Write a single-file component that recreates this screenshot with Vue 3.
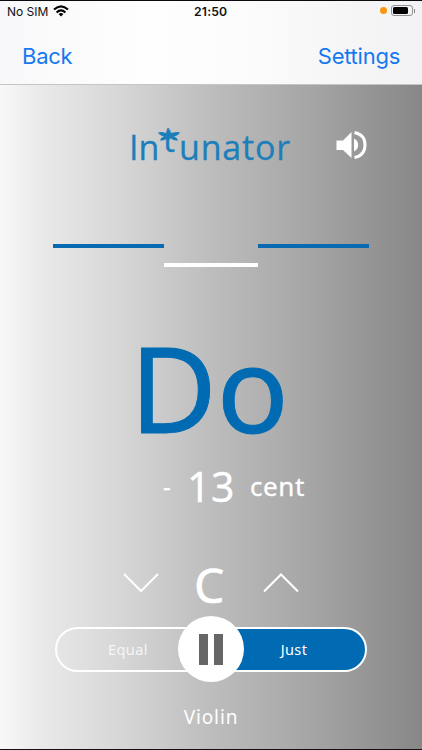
<script setup>
const meter = ['flat', 'center', 'sharp']
</script>

<template>
  <main class="phone">
    <header class="header">
      <div class="status">
        <span class="carrier">No SIM</span>
        <svg class="wifi" viewBox="0 0 16 12" width="16" height="12">
          <g fill="none" stroke="#000" stroke-width="2.1">
            <path d="M1 4.6Q8 -1.9 15 4.6" />
            <path d="M3.6 7.5Q8 3.4 12.4 7.5" />
          </g>
          <path d="M8 11.5L5.6 9Q8 7 10.4 9Z" />
        </svg>
        <span class="time">21:50</span>
        <i class="dot"></i>
        <span class="battery"><i></i></span>
        <i class="cap"></i>
      </div>
      <nav class="nav"><a class="back">Back</a><a class="settings">Settings</a></nav>
    </header>

    <section class="body">
      <div class="brand">
        <h1 class="logo"><span class="in">In</span><span class="tee">t<svg class="leaves" viewBox="0 0 24 14" width="24" height="14">
          <g fill="#1c7fbb">
            <path d="M10.600 0.300h3v9h-3z" />
            <path d="M12 6.500C8.500 1.800 5 1.200 0.800 2.500C3.500 6.200 8 7.700 12 6.500Z" />
            <path d="M12 6.500C15.500 1.800 19.500 1.200 23.200 2.500C20.500 6.200 16 7.700 12 6.500Z" />
            <path d="M12 5.200C7.500 5.700 4 7.200 3 10.400C7.500 10.800 10.500 9.200 12 5.200Z" />
            <path d="M12 5.200C16.500 5.700 20 7.200 21 10.400C16.500 10.800 13.500 9.200 12 5.200Z" />
          </g>
        </svg></span><span class="rest">unator</span></h1>
        <svg class="speaker" viewBox="0 0 32 30" width="32" height="30" fill="#fff">
          <path d="M0.500 10.500H7L15.500 2V28L7 20H0.500Z" />
          <path d="M18 8.500Q22.200 10.600 22.200 15Q22.200 19.400 18 21.500Z" />
          <path d="M18.500 2.500C26 4 29 9 29 15S26 26 18.500 27.500" fill="none" stroke="#fff" stroke-width="3" />
        </svg>
      </div>

      <div class="meter"><i v-for="m in meter" :key="m" :class="m"></i></div>
      <div class="note">Do</div>
      <div class="cents"><span class="sign">-</span><span class="num">13</span><span class="unit">cent</span></div>

      <div class="picker">
        <svg viewBox="0 0 36 20" width="36" height="20"><path d="M1 1L18 18L35 1" /></svg>
        <span class="key">C</span>
        <svg viewBox="0 0 36 20" width="36" height="20"><path d="M1 18.500L18 1.500L35 18.500" /></svg>
      </div>

      <div class="toggle">
        <button class="pill equal">Equal</button>
        <button class="pause"><i></i><i></i></button>
        <button class="pill just">Just</button>
      </div>
      <div class="instrument">Violin</div>
    </section>
  </main>
</template>

<style>
body { margin: 0; }
</style>

<style scoped>
* { box-sizing: border-box; }
.phone { width: 422px; height: 750px; overflow: hidden; display: flex; flex-direction: column; border-top: 1px solid #0d0a0d; border-bottom: 1px solid #111; font-family: "Noto Sans", sans-serif; }
.header { height: 84px; flex: none; background: linear-gradient(90deg, #f8f8fa, #fefefe 35%, #fcfcfc 55%, #f2f2f4); border-bottom: 1px solid #c4c6c6; font-family: Inter, sans-serif; }
.status { display: flex; align-items: center; height: 20px; padding-left: 7px; color: #111; }
.carrier { width: 46px; font-size: 12px; letter-spacing: 0; white-space: nowrap; }
.wifi { flex: none; }
.time { width: 42px; margin-left: 125px; font-size: 12.200px; font-weight: 600; letter-spacing: 0.200px; white-space: nowrap; }
.dot { width: 7px; height: 7px; margin-left: 144px; margin-top: -1px; border-radius: 50%; background: #f9960f; }
.battery { width: 22px; height: 11px; margin-left: 4px; margin-top: -1px; padding: 1px; border: 1px solid #919191; border-radius: 3px; }
.battery i { display: block; width: 15px; height: 7px; border-radius: 1.500px; background: #000; }
.cap { width: 1px; height: 4px; margin-left: 1px; margin-top: -1px; background: #888; }
.nav { display: flex; justify-content: space-between; height: 63px; padding: 0 22px; line-height: 71px; color: #1479f0; font-size: 22px; letter-spacing: -0.250px; }
.body { flex: 1; min-height: 0; display: flex; flex-direction: column; background: linear-gradient(90deg, #f8f8f8 0%, #e9e9e9 10%, #d8d8d8 27%, #bdbdbd 50%, #a5a5a5 74%, #878787 100%); color: #fff; }
.brand { display: flex; height: 120px; padding: 38px 0 0 129px; }
.logo { display: flex; width: 207px; margin: 0; font-family: "Open Sans", sans-serif; font-size: 34px; font-weight: 400; line-height: 48px; color: #1c7fbb; -webkit-text-stroke: 0.300px #1c7fbb; }
.in { width: 30px; }
.tee { position: relative; width: 20px; padding-left: 4px; line-height: 32px; }
.leaves { position: absolute; left: -2px; top: 7px; stroke: none; }
.rest { letter-spacing: 0.800px; }
.speaker { margin-top: 7px; flex: none; }
.meter { display: flex; height: 100px; padding: 39px 53px 0; }
.meter i { width: 111px; height: 4px; background: #086ab0; }
.meter .center { width: 94px; margin-top: 19px; background: #fff; }
.note { height: 155px; padding-left: 130px; font-size: 119px; line-height: 165px; color: #006bb3; -webkit-text-stroke: 1px #006bb3; }
.cents { display: flex; height: 54px; padding-left: 163px; line-height: 53px; -webkit-text-stroke: 0.300px #fff; }
.sign { width: 24px; font-size: 24px; line-height: 52px; }
.num { width: 63px; font-size: 41px; letter-spacing: 0.600px; }
.unit { font-size: 26px; letter-spacing: 0.600px; line-height: 52px; }
.picker { display: flex; height: 102px; padding: 45px 0 0 123px; }
.picker svg { margin-top: 14px; fill: none; stroke: #fff; stroke-width: 2; }
.key { width: 104px; padding-left: 35px; font-size: 48px; line-height: 52px; -webkit-text-stroke: 0.600px #fff; }
.toggle { display: flex; align-items: center; height: 66px; padding-left: 55px; }
.pill { width: 156px; height: 45px; padding: 0; border: 2px solid #fff; border-radius: 23px; background: transparent; color: #fff; font: 14.500px "Noto Sans", sans-serif; letter-spacing: 0.400px; }
.equal { padding-right: 10px; color: #f5f5f5; }
.just { margin-left: -33px; padding-left: 10px; background: #006bb3; }
.pause { display: flex; align-items: center; justify-content: center; gap: 6px; width: 66px; height: 66px; margin-left: -33px; padding: 0; border: 0; border-radius: 50%; background: #fff; position: relative; z-index: 1; }
.pause i { width: 9px; height: 31px; background: #666; }
.instrument { padding-top: 20px; text-align: center; font-size: 19px; line-height: 30px; letter-spacing: 0.900px; }
</style>
